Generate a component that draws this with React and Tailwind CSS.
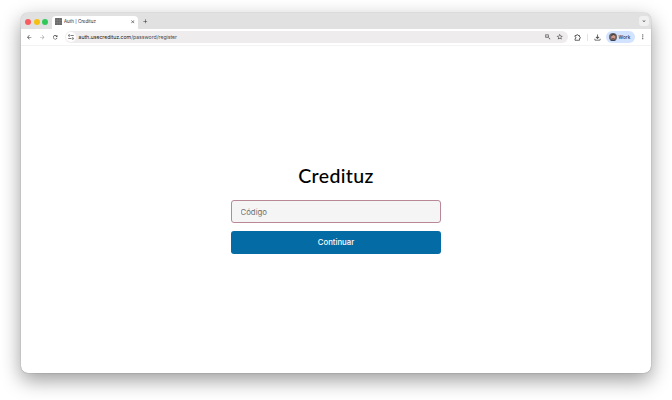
import React from 'react'
import { MdArrowBack, MdArrowForward, MdRefresh, MdClose, MdAdd, MdStarBorder, MdOutlineFileDownload, MdMoreVert, MdKeyboardArrowDown, MdZoomIn } from 'react-icons/md'

const TuneIcon = () => (
    <svg viewBox="0 0 12 12" className="h-[6px] w-[6px]" fill="none" stroke="#444" strokeWidth="1.4">
        <circle cx="2.5" cy="3" r="1.6" />
        <path d="M6 3H11.5M.5 9H6" />
        <circle cx="9.5" cy="9" r="1.6" />
    </svg>
)

const PuzzleIcon = () => (
    <svg viewBox="0 0 14 14" className="ml-[6.5px] h-[7px] w-[7px]" fill="none" stroke="#444" strokeWidth="1.6">
        <path d="M2 3H5Q5 1 6.5 1T8 3H11V6Q13 6 13 7.5T11 9V12.5H2V9.5Q4 9 4 7.5T2 6Z" />
    </svg>
)

const GridFavicon = () => (
    <svg viewBox="0 0 14 14" className="h-[7px] w-[7px] shrink-0">
        <rect width="14" height="14" rx="1" fill="#686868" />
        <path d="M4.5 0V14M9.5 0V14M0 4.5H14M0 9.5H14" stroke="#929292" strokeWidth=".8" />
    </svg>
)

const Avatar = () => (
    <svg viewBox="0 0 16 16" className="h-[8px] w-[8px] shrink-0">
        <defs>
            <clipPath id="avatar"><circle cx="8" cy="8" r="8" /></clipPath>
        </defs>
        <g clipPath="url(#avatar)">
            <rect width="16" height="16" fill="#68636a" />
            <ellipse cx="8.5" cy="8" rx="4.2" ry="5" fill="#cf9b86" />
            <path d="M3.5 7Q4 1 9 1.5Q13 2 13 6L9 4Z" fill="#4b4141" />
            <path d="M6 10H11V13H6Z" fill="#85564a" />
            <path d="M1 16Q4 12 8 14Q13 12 15 16Z" fill="#353d50" />
        </g>
    </svg>
)

const TabStrip = () => (
    <div className="flex h-[16px] items-end bg-[#e1e1e1]">
        <div className="flex h-full w-[31px] items-center gap-[2.5px] pl-[4px] pt-[1px]">
            <span className="h-[6px] w-[6px] rounded-full bg-[#fa5b5f]" />
            <span className="h-[6px] w-[6px] rounded-full bg-[#f6c012]" />
            <span className="h-[6px] w-[6px] rounded-full bg-[#31c85a]" />
        </div>
        <div className="flex h-[13px] w-[86px] items-center rounded-t-[4px] bg-white pb-[2px] pl-[3px] pr-[3px]">
            <GridFavicon />
            <span className="ml-[2px] flex-1 whitespace-nowrap pt-[1px] text-[4.5px] leading-none text-[#242424]">Auth | Credituz</span>
            <MdClose className="h-[5.5px] w-[5.5px] text-[#222]" />
        </div>
        <MdAdd className="mb-[4.5px] ml-[4px] h-[6.5px] w-[6.5px] text-[#333]" />
        <div className="mb-[3px] ml-auto mr-[2px] flex h-[10px] w-[10px] items-center justify-center rounded-[3px] bg-[#f0f0f0]">
            <MdKeyboardArrowDown className="h-[6px] w-[6px] text-[#222]" />
        </div>
    </div>
)

const Toolbar = () => (
    <div className="flex h-[17px] items-center border-b border-[#f3f3f3] bg-white text-[#444]">
        <MdArrowBack className="ml-[5px] h-[6.5px] w-[6.5px]" />
        <MdArrowForward className="ml-[6.5px] h-[6.5px] w-[6.5px] text-[#aaa]" />
        <MdRefresh className="ml-[6px] h-[6.5px] w-[6.5px]" />
        <div className="ml-[6.5px] flex h-[12px] w-[503px] items-center rounded-full bg-[#efecee] pl-[1.5px] pr-[4px]">
            <span className="flex h-[10px] w-[10px] items-center justify-center rounded-full bg-white">
                <TuneIcon />
            </span>
            <span className="ml-[2.5px] flex-1 whitespace-nowrap pt-[1px] text-[5.15px] leading-none text-[#4a4a4a]">
                <span className="text-[#202020]">auth.usecredituz.com</span>/password/register
            </span>
            <MdZoomIn className="h-[7.5px] w-[7.5px]" />
            <MdStarBorder className="ml-[4.5px] h-[7.5px] w-[7.5px]" />
        </div>
        <PuzzleIcon />
        <span className="ml-[6px] h-[7px] w-px bg-[#e2e4e9]" />
        <MdOutlineFileDownload className="ml-[5px] h-[9px] w-[9px]" />
        <div className="ml-[3.5px] flex h-[12px] w-[29.5px] items-center gap-[2px] rounded-full bg-[#d2e3ff] pl-[3px]">
            <Avatar />
            <span className="pt-[1px] text-[4.7px] font-medium leading-none text-[#22345d]">Work</span>
        </div>
        <MdMoreVert className="ml-[4px] h-[7.5px] w-[7.5px]" />
    </div>
)

const App = () => {
    return (
        <div className="h-[400px] w-[672px] overflow-hidden bg-white pl-[21px] pt-[13px] font-['Inter',sans-serif]">
            <div className="h-[360px] w-[630px] overflow-hidden rounded-[7px] bg-white shadow-[0_0_1px_rgba(0,0,0,0.5),0_7px_20px_rgba(0,0,0,0.4)]">
                <TabStrip />
                <Toolbar />
                <main className="flex flex-col items-center pt-[114px]">
                    <h1 className="h-[32px] font-['Lato',sans-serif] text-[19.5px] font-medium leading-[32px] tracking-[0.35px] text-black">Credituz</h1>
                    <form className="mt-[8px] flex w-[210px] flex-col gap-[8.5px]" onSubmit={(e) => e.preventDefault()}>
                        <input
                            type="text"
                            placeholder="Código"
                            className="h-[22.5px] rounded-[3px] border border-[#b98896] bg-[#f5f5f5] px-[8.5px] pt-[1px] text-[7.8px] outline-none placeholder:text-[#707070]"
                        />
                        <button type="submit" className="h-[22.5px] rounded-[3px] bg-[#046ba5] pt-[2px] text-[7.75px] font-medium text-white">
                            Continuar
                        </button>
                    </form>
                </main>
            </div>
        </div>
    )
}

export default App
